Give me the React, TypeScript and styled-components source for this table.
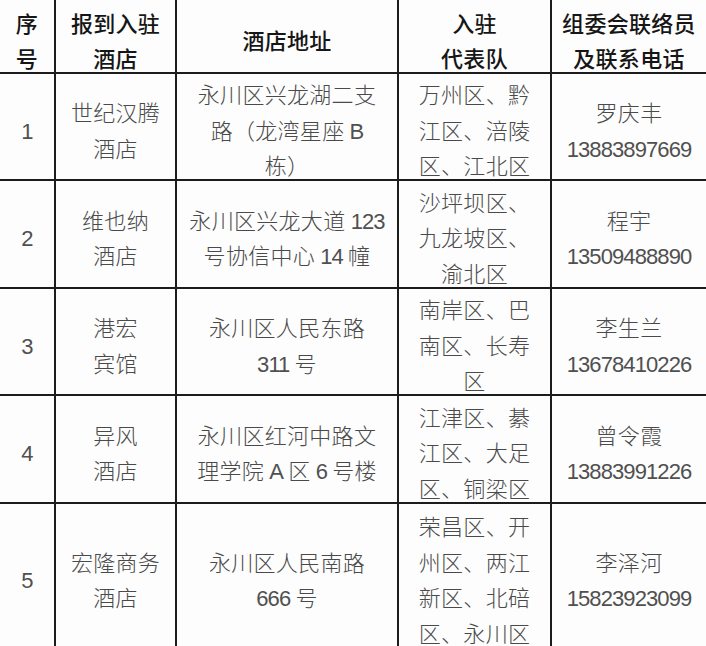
import React from 'react';
import styled, { createGlobalStyle } from 'styled-components';

const GlobalStyle = createGlobalStyle`
  html, body {
    margin: 0;
    padding: 0;
    background: #fff;
  }
  body {
    overflow: hidden;
  }
`;

const Table = styled.div`
  display: grid;
  grid-template-columns: 56px 121px 222px 153px 154px;
  grid-template-rows: 74px 107px 108px 107px 108px 146px;
  width: 706px;
  background: #fdfdfd;
  font-family: "Noto Sans CJK SC", sans-serif;
`;

const Cell = styled.div<{ $last?: boolean; $head?: boolean }>`
  box-sizing: border-box;
  display: flex;
  flex-direction: column;
  align-items: center;
  justify-content: center;
  border-right: ${(p) => (p.$last ? 'none' : '2px solid #1c1c1c')};
  border-bottom: 2px solid #1c1c1c;
  padding-top: ${(p) => (p.$head ? '8px' : '6px')};
  text-align: center;
  white-space: nowrap;
  font-size: 22px;
  font-weight: ${(p) => (p.$head ? 500 : 300)};
  color: ${(p) => (p.$head ? '#161616' : '#4a4a4a')};
  line-height: 35.5px;
`;

const Line = styled.div`
  height: 35.5px;
  letter-spacing: 0.3px;
`;

const Num = styled.span`
  font-family: "Liberation Sans", sans-serif;
  font-size: 22px;
  font-weight: 400;
  letter-spacing: -0.9px;
  color: #505050;
`;

const renderText = (text: string) =>
  text.split(/([0-9A-Z]+)/).map((part, i) =>
    /^[0-9A-Z]+$/.test(part) ? <Num key={i}>{part}</Num> : <React.Fragment key={i}>{part}</React.Fragment>
  );

const header = [
  ['序', '号'],
  ['报到入驻', '酒店'],
  ['酒店地址'],
  ['入驻', '代表队'],
  ['组委会联络员', '及联系电话'],
];

const rows: string[][][] = [
  [
    ['1'],
    ['世纪汉腾', '酒店'],
    ['永川区兴龙湖二支', '路（龙湾星座 B', '栋）'],
    ['万州区、黔', '江区、涪陵', '区、江北区'],
    ['罗庆丰', '13883897669'],
  ],
  [
    ['2'],
    ['维也纳', '酒店'],
    ['永川区兴龙大道 123', '号协信中心 14 幢'],
    ['沙坪坝区、', '九龙坡区、', '渝北区'],
    ['程宇', '13509488890'],
  ],
  [
    ['3'],
    ['港宏', '宾馆'],
    ['永川区人民东路', '311 号'],
    ['南岸区、巴', '南区、长寿', '区'],
    ['李生兰', '13678410226'],
  ],
  [
    ['4'],
    ['异风', '酒店'],
    ['永川区红河中路文', '理学院 A 区 6 号楼'],
    ['江津区、綦', '江区、大足', '区、铜梁区'],
    ['曾令霞', '13883991226'],
  ],
  [
    ['5'],
    ['宏隆商务', '酒店'],
    ['永川区人民南路', '666 号'],
    ['荣昌区、开', '州区、两江', '新区、北碚', '区、永川区'],
    ['李泽河', '15823923099'],
  ],
];

export default function App() {
  return (
    <>
      <GlobalStyle />
      <Table>
        {header.map((lines, c) => (
          <Cell key={`h${c}`} $head $last={c === 4}>
            {lines.map((l, i) => (
              <Line key={i}>{l}</Line>
            ))}
          </Cell>
        ))}
        {rows.map((row, r) =>
          row.map((lines, c) => (
            <Cell key={`${r}-${c}`} $last={c === 4}>
              {lines.map((l, i) => (
                <Line key={i}>{renderText(l)}</Line>
              ))}
            </Cell>
          ))
        )}
      </Table>
    </>
  );
}
